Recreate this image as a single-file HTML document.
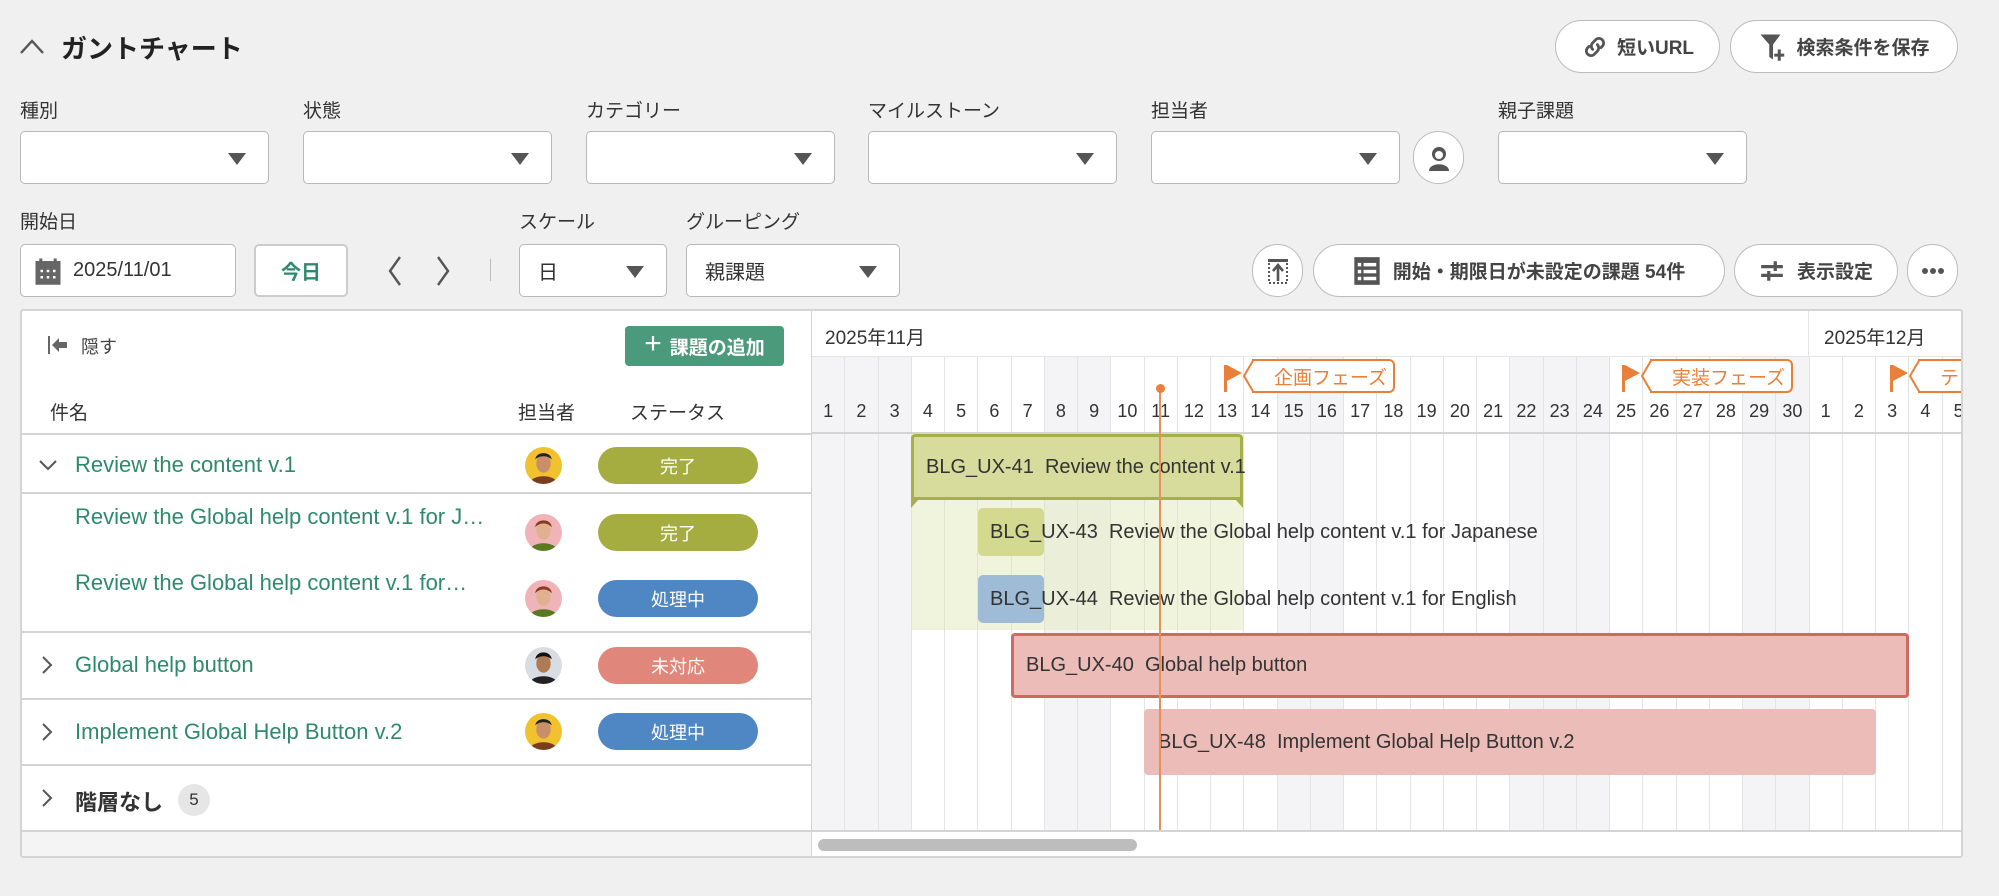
<!DOCTYPE html>
<html><head><meta charset="utf-8"><style>
*{box-sizing:border-box;margin:0;padding:0}
body{width:1999px;height:896px;background:#f0f0f0;font-family:"Liberation Sans","Noto Sans CJK JP",sans-serif;color:#333;position:relative;overflow:hidden}
.a{position:absolute}
.lbl{position:absolute;font-size:19px;color:#333}
.sel{position:absolute;background:#fff;border:1px solid #b8b8b8;border-radius:5px;height:53px}
.sel .tri{position:absolute;right:22px;top:21px;width:0;height:0;border-left:9px solid transparent;border-right:9px solid transparent;border-top:12px solid #555}
.btn{position:absolute;background:#fff;border:1px solid #bcbcbc;border-radius:27px;height:53px;display:flex;align-items:center;justify-content:center;font-size:19px;font-weight:bold;color:#444}
.pill{position:absolute;left:598px;width:160px;height:37px;border-radius:19px;color:#fff;font-size:18px;display:flex;align-items:center;justify-content:center}
.name{position:absolute;left:75px;font-size:22px;color:#2f8a6c;white-space:nowrap}
.av{position:absolute;left:525px;width:37px;height:37px;border-radius:50%;overflow:hidden}
.hl{position:absolute;left:20px;width:791px;height:2px;background:#d4d4d4}
.days{position:absolute;left:811px;top:357px;display:flex;height:474px}
.days div{width:33.25px;flex:none;border-left:1px solid #e4e4e4;text-align:center;font-size:18px;color:#333;padding-top:44px}
.days div.w{background:#f4f4f6}
.bar{position:absolute;font-size:20px;color:#333;white-space:nowrap;display:flex;align-items:center}
.tag{position:absolute;top:359px;height:34px;border:2px solid #e8803a;border-radius:0 6px 6px 0;color:#e8803a;font-size:19px;padding-left:20px;display:flex;align-items:center;background:#fff}
.flag{position:absolute;top:365px;width:3px;height:27px;background:#e8803a}
.flag:after{content:"";position:absolute;left:3px;top:0;border-top:8px solid transparent;border-bottom:8px solid transparent;border-left:15px solid #e8803a}
</style></head><body>

<svg class="a" style="left:18px;top:36px" width="28" height="20" viewBox="0 0 28 20"><path d="M3 17 L14 5 L25 17" fill="none" stroke="#555" stroke-width="2.4"/></svg>
<div class="a" style="left:61px;top:29px;font-size:26px;font-weight:bold;color:#222">ガントチャート</div>

<div class="btn" style="left:1555px;top:20px;width:165px">
<svg width="28" height="28" viewBox="0 0 24 24" style="margin-right:8px"><path d="M10 14 a4 4 0 0 1 0-5.6 l3-3 a4 4 0 0 1 5.6 5.6 l-1.5 1.5 M14 10 a4 4 0 0 1 0 5.6 l-3 3 a4 4 0 0 1-5.6-5.6 l1.5-1.5" fill="none" stroke="#555" stroke-width="2.4" stroke-linecap="round"/></svg>短いURL</div>
<div class="btn" style="left:1730px;top:20px;width:228px">
<svg width="30" height="30" viewBox="0 0 24 24" style="margin-right:8px"><path d="M2 2 H18 L12 10 V22 L9 20 V10 Z" fill="#555"/><path d="M17 14 V23 M13 18.5 H21" stroke="#555" stroke-width="2.4"/></svg>検索条件を保存</div>

<div class="lbl" style="left:20px;top:96px">種別</div>
<div class="lbl" style="left:303px;top:96px">状態</div>
<div class="lbl" style="left:586px;top:96px">カテゴリー</div>
<div class="lbl" style="left:868px;top:96px">マイルストーン</div>
<div class="lbl" style="left:1151px;top:96px">担当者</div>
<div class="lbl" style="left:1498px;top:96px">親子課題</div>
<div class="sel" style="left:20px;top:131px;width:249px"><div class="tri"></div></div>
<div class="sel" style="left:303px;top:131px;width:249px"><div class="tri"></div></div>
<div class="sel" style="left:586px;top:131px;width:249px"><div class="tri"></div></div>
<div class="sel" style="left:868px;top:131px;width:249px"><div class="tri"></div></div>
<div class="sel" style="left:1151px;top:131px;width:249px"><div class="tri"></div></div>
<div class="btn" style="left:1413px;top:131px;width:51px"><svg width="26" height="28" viewBox="0 0 26 28"><circle cx="13" cy="10" r="7" fill="#555"/><path d="M3 27 C3 18 23 18 23 27Z" fill="#555"/><circle cx="13" cy="11" r="4" fill="#fff"/></svg></div>
<div class="sel" style="left:1498px;top:131px;width:249px"><div class="tri"></div></div>

<div class="lbl" style="left:20px;top:207px">開始日</div>
<div class="lbl" style="left:519px;top:207px">スケール</div>
<div class="lbl" style="left:686px;top:207px">グルーピング</div>
<div class="sel" style="left:20px;top:244px;width:216px;font-size:20px;display:flex;align-items:center;padding-left:12px">
<svg width="30" height="30" viewBox="0 0 24 24" style="margin-right:10px"><rect x="2" y="4" width="20" height="19" fill="#666"/><rect x="5" y="2" width="2.5" height="5" fill="#666"/><rect x="16.5" y="2" width="2.5" height="5" fill="#666"/><g fill="#fff"><rect x="6" y="11" width="2" height="2"/><rect x="11" y="11" width="2" height="2"/><rect x="16" y="11" width="2" height="2"/><rect x="6" y="16" width="2" height="2"/><rect x="11" y="16" width="2" height="2"/><rect x="16" y="16" width="2" height="2"/></g></svg>2025/11/01</div>
<div class="sel" style="left:254px;top:244px;width:94px;display:flex;align-items:center;justify-content:center;font-size:20px;font-weight:bold;color:#2f8a6c;border-width:2px;border-color:#ccc">今日</div>
<svg class="a" style="left:380px;top:254px" width="80" height="34" viewBox="0 0 80 34"><path d="M20 3 L10 17 L20 31 M58 3 L68 17 L58 31" fill="none" stroke="#555" stroke-width="2.4"/></svg>
<div class="a" style="left:490px;top:259px;width:1px;height:22px;background:#bbb"></div>
<div class="sel" style="left:519px;top:244px;width:148px;font-size:20px;display:flex;align-items:center;padding-left:18px">日<div class="tri"></div></div>
<div class="sel" style="left:686px;top:244px;width:214px;font-size:20px;display:flex;align-items:center;padding-left:18px">親課題<div class="tri"></div></div>

<div class="btn" style="left:1252px;top:244px;width:51px"><svg width="24" height="28" viewBox="0 0 24 28"><rect x="2" y="2" width="20" height="3" fill="#555"/><path d="M3 6 V26 H21 V6" fill="none" stroke="#555" stroke-width="2" stroke-dasharray="2 2"/><path d="M12 24 V9 M7 14 L12 8 L17 14" fill="none" stroke="#555" stroke-width="2.6"/></svg></div>
<div class="btn" style="left:1313px;top:244px;width:412px"><svg width="28" height="30" viewBox="0 0 24 26" style="margin-right:12px"><rect x="1" y="1" width="22" height="24" fill="#555"/><g fill="#fff"><rect x="4" y="6" width="3" height="3"/><rect x="9" y="6" width="11" height="3"/><rect x="4" y="12" width="3" height="3"/><rect x="9" y="12" width="11" height="3"/><rect x="4" y="18" width="3" height="3"/><rect x="9" y="18" width="11" height="3"/></g></svg>開始・期限日が未設定の課題 54件</div>
<div class="btn" style="left:1734px;top:244px;width:164px"><svg width="26" height="26" viewBox="0 0 24 24" style="margin-right:12px"><path d="M2 8 H22 M2 16 H22 M15 3 V12 M9 12 V21" stroke="#555" stroke-width="3"/></svg>表示設定</div>
<div class="btn" style="left:1907px;top:244px;width:51px"><svg width="24" height="8"><circle cx="4" cy="4" r="3" fill="#555"/><circle cx="12" cy="4" r="3" fill="#555"/><circle cx="20" cy="4" r="3" fill="#555"/></svg></div>

<!-- main panel -->
<div class="a" style="left:20px;top:309px;width:1943px;height:549px;background:#fff;border:2px solid #d4d4d4;border-radius:3px"></div>
<div class="a" style="left:811px;top:309px;width:1px;height:549px;background:#d4d4d4"></div>

<svg class="a" style="left:47px;top:335px" width="22" height="20" viewBox="0 0 22 20"><rect x="1" y="1" width="2" height="18" fill="#666"/><path d="M5 10 L12 3 V7 H20 V13 H12 V17Z" fill="#666"/></svg>
<div class="a" style="left:81px;top:333px;font-size:18px;color:#444">隠す</div>
<div class="a" style="left:625px;top:326px;width:159px;height:40px;background:#4a9a7b;border-radius:4px;color:#fff;font-size:19px;font-weight:bold;display:flex;align-items:center;justify-content:center"><span style="font-size:30px;font-weight:normal;margin-right:8px;margin-top:-4px">+</span>課題の追加</div>
<div class="a" style="left:50px;top:398px;font-size:19px">件名</div>
<div class="a" style="left:518px;top:398px;font-size:19px">担当者</div>
<div class="a" style="left:630px;top:398px;font-size:19px">ステータス</div>
<div class="hl" style="top:433px"></div>
<div class="hl" style="top:492px"></div>
<div class="hl" style="top:631px"></div>
<div class="hl" style="top:698px"></div>
<div class="hl" style="top:764px"></div>
<div class="hl" style="top:830px;left:20px;width:1943px"></div>
<div class="a" style="left:22px;top:832px;width:789px;height:24px;background:#f4f4f4"></div>

<svg class="a" style="left:38px;top:458px" width="20" height="16"><path d="M2 3 L10 11 L18 3" fill="none" stroke="#555" stroke-width="2"/></svg>
<div class="name" style="top:452px">Review the content v.1</div>
<div class="name" style="top:504px">Review the Global help content v.1 for J…</div>
<div class="name" style="top:570px">Review the Global help content v.1 for…</div>
<svg class="a" style="left:40px;top:655px" width="14" height="20"><path d="M3 2 L11 10 L3 18" fill="none" stroke="#555" stroke-width="2"/></svg>
<div class="name" style="top:652px">Global help button</div>
<svg class="a" style="left:40px;top:722px" width="14" height="20"><path d="M3 2 L11 10 L3 18" fill="none" stroke="#555" stroke-width="2"/></svg>
<div class="name" style="top:719px">Implement Global Help Button v.2</div>
<svg class="a" style="left:40px;top:788px" width="14" height="20"><path d="M3 2 L11 10 L3 18" fill="none" stroke="#555" stroke-width="2"/></svg>
<div class="a" style="left:75px;top:785px;font-size:22px;font-weight:bold;color:#333">階層なし</div>
<div class="a" style="left:178px;top:784px;width:32px;height:32px;border-radius:50%;background:#e6e6e6;font-size:17px;display:flex;align-items:center;justify-content:center">5</div>

<svg class="av" style="top:447px" viewBox="0 0 36 36"><rect width="36" height="36" fill="#f2c12e"/><path d="M4 36 C6 26 30 26 32 36Z" fill="#7a3d22"/><ellipse cx="18" cy="16" rx="7" ry="9" fill="#c98f6a"/><path d="M10 12 C11 4 25 4 26 12 C22 8 14 8 10 12Z" fill="#222"/></svg>
<svg class="av" style="top:514px" viewBox="0 0 36 36"><rect width="36" height="36" fill="#f0b4b8"/><path d="M4 36 C6 26 30 26 32 36Z" fill="#5a7a22"/><ellipse cx="18" cy="16" rx="7" ry="9" fill="#e0b090"/><path d="M10 13 C10 4 26 4 26 13 C22 8 14 8 10 13Z" fill="#8a3a22"/></svg>
<svg class="av" style="top:580px" viewBox="0 0 36 36"><rect width="36" height="36" fill="#f0b4b8"/><path d="M4 36 C6 26 30 26 32 36Z" fill="#5a7a22"/><ellipse cx="18" cy="16" rx="7" ry="9" fill="#e0b090"/><path d="M10 13 C10 4 26 4 26 13 C22 8 14 8 10 13Z" fill="#8a3a22"/></svg>
<svg class="av" style="top:647px" viewBox="0 0 36 36"><rect width="36" height="36" fill="#d8dde3"/><path d="M4 36 C6 26 30 26 32 36Z" fill="#222"/><ellipse cx="18" cy="16" rx="7" ry="9" fill="#b07a55"/><path d="M10 12 C11 3 25 3 26 12 C22 8 14 8 10 12Z" fill="#111"/></svg>
<svg class="av" style="top:713px" viewBox="0 0 36 36"><rect width="36" height="36" fill="#f2c12e"/><path d="M4 36 C6 26 30 26 32 36Z" fill="#7a3d22"/><ellipse cx="18" cy="16" rx="7" ry="9" fill="#c98f6a"/><path d="M10 12 C11 4 25 4 26 12 C22 8 14 8 10 12Z" fill="#222"/></svg>

<div class="pill" style="top:447px;background:#a5ad40">完了</div>
<div class="pill" style="top:514px;background:#a5ad40">完了</div>
<div class="pill" style="top:580px;background:#4f87c4">処理中</div>
<div class="pill" style="top:647px;background:#e1867a">未対応</div>
<div class="pill" style="top:713px;background:#4f87c4">処理中</div>

<div style="position:absolute;left:812px;top:311px;width:1149px;height:545px;overflow:hidden">
<div style="position:absolute;left:-812px;top:-311px;width:1999px;height:896px">
<div class="a" style="left:825px;top:323px;font-size:19px">2025年11月</div>
<div class="a" style="left:1808px;top:311px;width:1px;height:46px;background:#e4e4e4"></div>
<div class="a" style="left:1824px;top:323px;font-size:19px">2025年12月</div>
<div class="a" style="left:811px;top:356px;width:1160px;height:1px;background:#e4e4e4"></div>
<div class="days">
<div class="w">1</div><div class="w">2</div><div class="w">3</div><div>4</div><div>5</div><div>6</div><div>7</div><div class="w">8</div><div class="w">9</div><div>10</div><div>11</div><div>12</div><div>13</div><div>14</div><div class="w">15</div><div class="w">16</div><div>17</div><div>18</div><div>19</div><div>20</div><div>21</div><div class="w">22</div><div class="w">23</div><div class="w">24</div><div>25</div><div>26</div><div>27</div><div>28</div><div class="w">29</div><div class="w">30</div><div>1</div><div>2</div><div>3</div><div>4</div><div>5</div>
</div>
<div class="a" style="left:811px;top:432px;width:1160px;height:2px;background:#d4d4d4"></div>

<div class="flag" style="left:1224px"></div>
<div class="tag" style="left:1252px;width:143px">企画フェーズ</div>
<svg class="a" style="left:1243px;top:359px" width="12" height="34"><path d="M11 0 L1 17 L11 34" fill="#fff" stroke="#e8803a" stroke-width="2"/></svg>
<div class="flag" style="left:1622px"></div>
<div class="tag" style="left:1650px;width:143px">実装フェーズ</div>
<svg class="a" style="left:1641px;top:359px" width="12" height="34"><path d="M11 0 L1 17 L11 34" fill="#fff" stroke="#e8803a" stroke-width="2"/></svg>
<div class="flag" style="left:1890px"></div>
<div class="tag" style="left:1918px;width:143px">テスト</div>
<svg class="a" style="left:1909px;top:359px" width="12" height="34"><path d="M11 0 L1 17 L11 34" fill="#fff" stroke="#e8803a" stroke-width="2"/></svg>

<div class="a" style="left:911px;top:500px;width:332px;height:130px;background:rgba(225,230,180,0.45)"></div>
<div class="bar" style="left:911px;top:434px;width:332px;height:66px;background:#d7dc9d;border:3px solid #a6b04a;border-radius:4px 4px 0 0;padding-left:12px;overflow:visible">BLG_UX-41&nbsp; Review the content v.1</div>
<svg class="a" style="left:911px;top:499px" width="332" height="10"><path d="M0 0 L8 0 L0 9Z M332 0 L324 0 L332 9Z" fill="#a6b04a"/></svg>
<div class="a" style="left:978px;top:508px;width:66px;height:48px;background:#d3d98f;border-radius:5px"></div>
<div class="bar" style="left:990px;top:508px;height:48px">BLG_UX-43&nbsp; Review the Global help content v.1 for Japanese</div>
<div class="a" style="left:978px;top:575px;width:66px;height:48px;background:#9ebcd6;border-radius:5px"></div>
<div class="bar" style="left:990px;top:575px;height:48px">BLG_UX-44&nbsp; Review the Global help content v.1 for English</div>
<div class="bar" style="left:1011px;top:633px;width:898px;height:65px;background:#ecbdb8;border:3px solid #cf6a60;border-radius:4px;padding-left:12px">BLG_UX-40&nbsp; Global help button</div>
<div class="bar" style="left:1144px;top:709px;width:732px;height:66px;background:#ecbdb8;border-radius:4px;padding-left:14px">BLG_UX-48&nbsp; Implement Global Help Button v.2</div>

<div class="a" style="left:1159px;top:388px;width:2px;height:443px;background:#e8905a"></div>
<div class="a" style="left:1156px;top:384px;width:9px;height:9px;border-radius:50%;background:#e8803a"></div>

<div class="a" style="left:811px;top:830px;width:1160px;height:2px;background:#d4d4d4"></div>
<div class="a" style="left:811px;top:832px;width:1160px;height:26px;background:#fff"></div>
<div class="a" style="left:818px;top:839px;width:319px;height:12px;border-radius:6px;background:#bdbdbd"></div>
</div></div>
</body></html>
